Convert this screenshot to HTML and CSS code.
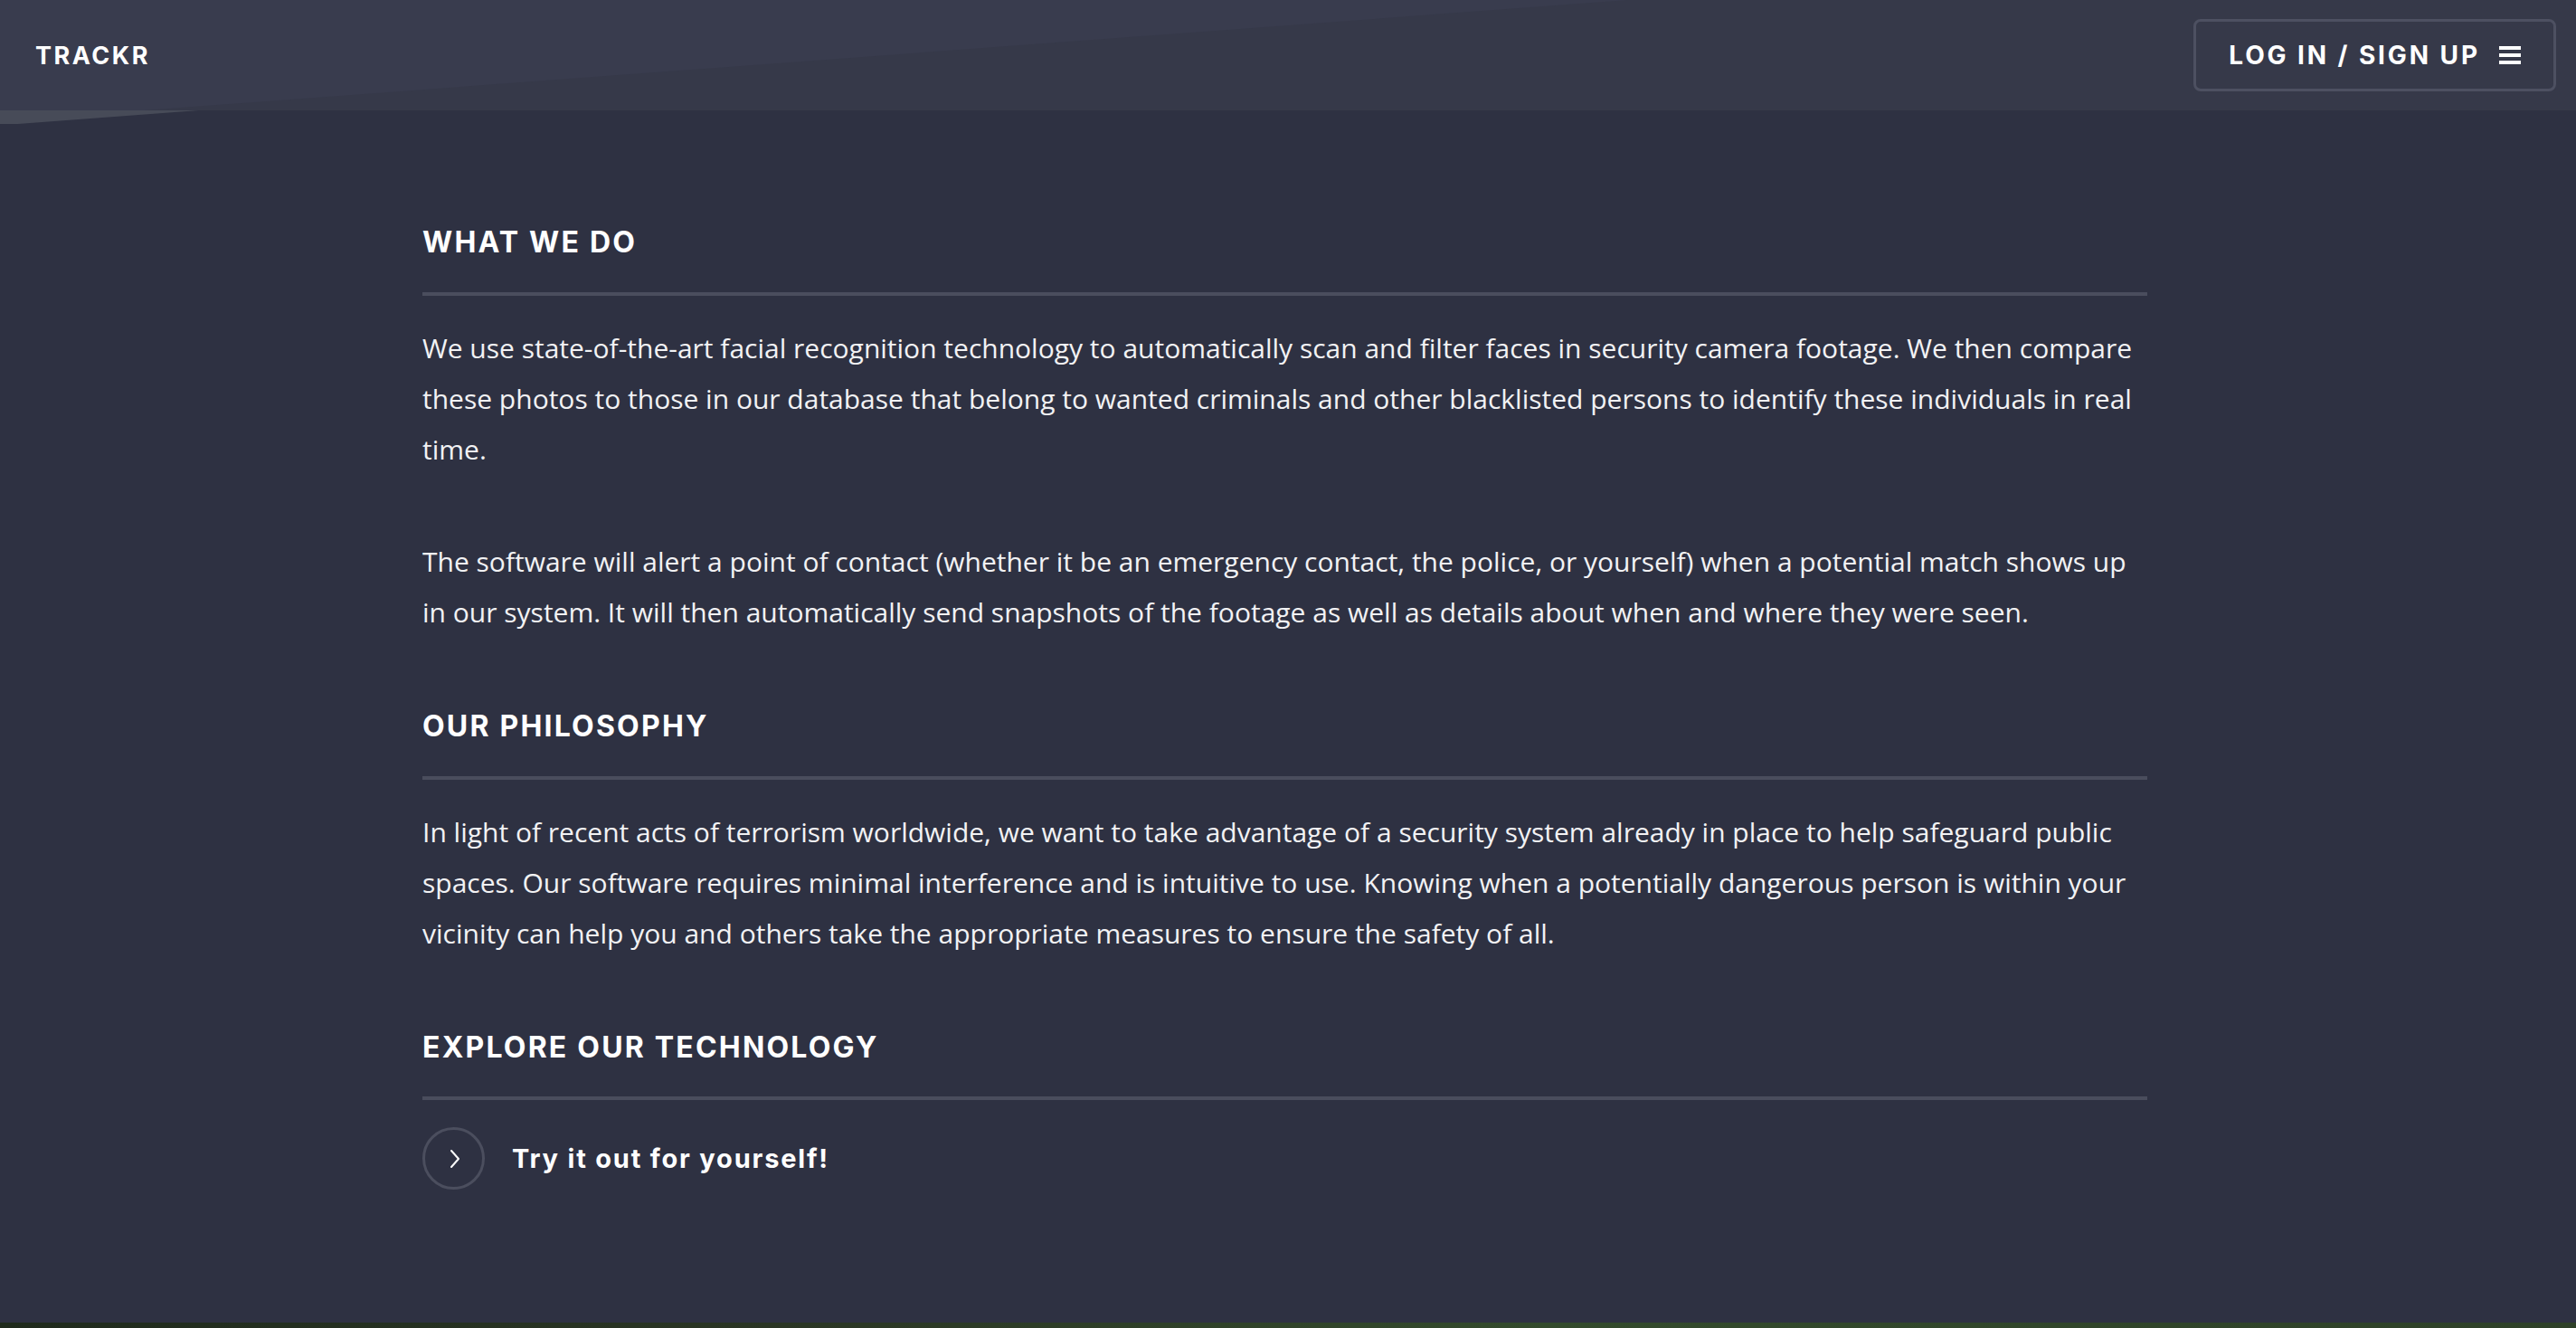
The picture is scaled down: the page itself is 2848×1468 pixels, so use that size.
FILE: index.html
```html
<!DOCTYPE html>
<html lang="en">
<head>
<meta charset="utf-8">
<title>Trackr</title>
<link rel="stylesheet" href="styles.css">
</head>
<body>
<header class="topbar">
  <div class="brand">TRACKR</div>
  <button class="auth-btn" type="button">
    <span class="auth-label">LOG IN / SIGN UP</span>
    <span class="burger"><span></span><span></span><span></span></span>
  </button>
</header>
<main class="content">
  <div class="container">
    <section class="block">
      <h2 class="block-title">WHAT WE DO</h2>
      <hr class="rule">
      <p class="copy">We use state-of-the-art facial recognition technology to automatically scan and filter faces in security camera footage. We then compare these photos to those in our database that belong to wanted criminals and other blacklisted persons to identify these individuals in real time.</p>
      <p class="copy">The software will alert a point of contact (whether it be an emergency contact, the police, or yourself) when a potential match shows up in our system. It will then automatically send snapshots of the footage as well as details about when and where they were seen.</p>
    </section>
    <section class="block">
      <h2 class="block-title">OUR PHILOSOPHY</h2>
      <hr class="rule">
      <p class="copy">In light of recent acts of terrorism worldwide, we want to take advantage of a security system already in place to help safeguard public spaces. Our software requires minimal interference and is intuitive to use. Knowing when a potentially dangerous person is within your vicinity can help you and others take the appropriate measures to ensure the safety of all.</p>
    </section>
    <section class="block">
      <h2 class="block-title">EXPLORE OUR TECHNOLOGY</h2>
      <hr class="rule rule-tight">
      <a class="try-link" href="#">
        <span class="circle">
          <svg width="14" height="22" viewBox="0 0 14 22" aria-hidden="true"><path d="M3 2 L11 11 L3 20" fill="none" stroke="#ffffff" stroke-width="2" stroke-linecap="round" stroke-linejoin="round"/></svg>
        </span>
        <span class="try-text">Try it out for yourself!</span>
      </a>
    </section>
  </div>
</main>
<div class="bottom-strip"></div>
</body>
</html>
```

FILE: styles.css
```css
html, body {
  margin: 0;
  padding: 0;
}
body {
  background: #2e3142;
  color: #ffffff;
  font-family: "Open Sans", "Noto Sans", sans-serif;
  overflow: hidden;
}

.topbar {
  position: relative;
  z-index: 2;
  height: 122px;
  background: #363949;
  display: flex;
  align-items: center;
  justify-content: space-between;
  padding: 0 22px 0 39px;
  box-sizing: border-box;
}
.topbar::before {
  content: "";
  position: absolute;
  left: 0;
  top: 0;
  width: 1800px;
  height: 122px;
  background: #393c4e;
  clip-path: polygon(0 0, 1800px 0, 160px 122px, 0 122px);
  z-index: -1;
}
.topbar::after {
  content: "";
  position: absolute;
  left: 0;
  top: 122px;
  width: 220px;
  height: 15px;
  background: #474b58;
  clip-path: polygon(0 0, 220px 0, 20px 15px, 0 15px);
}

.brand {
  font-family: "Inter", "Lato", sans-serif;
  font-weight: 700;
  font-size: 27px;
  letter-spacing: 2.5px;
  color: #ffffff;
  line-height: 1;
  margin-top: 1px;
}

.auth-btn {
  display: flex;
  align-items: center;
  gap: 21px;
  height: 80px;
  padding: 0 36px;
  background: transparent;
  border: 3px solid #4d5061;
  border-radius: 8px;
  color: #ffffff;
  font-family: "Inter", "Lato", sans-serif;
  font-weight: 700;
  font-size: 28px;
  letter-spacing: 2.9px;
  cursor: pointer;
  box-sizing: border-box;
}
.auth-label {
  line-height: 1;
}
.burger {
  display: flex;
  flex-direction: column;
  justify-content: space-between;
  width: 24px;
  height: 20px;
}
.burger span {
  display: block;
  height: 4px;
  background: #ffffff;
}

.content {
  height: 1340px;
  box-sizing: border-box;
  padding-top: 126px;
}
.container {
  width: 1914px;
  padding-right: 7px;
  box-sizing: border-box;
  margin: 0 auto;
}

.block {
  margin-bottom: 78px;
}
.block-title {
  margin: 0;
  font-family: "Inter", "Lato", sans-serif;
  font-weight: 700;
  font-size: 32px;
  line-height: 40px;
  letter-spacing: 2.2px;
  color: #ffffff;
}
.rule {
  margin: 35px 0 30px;
  border: 0;
  height: 4px;
  background: #4a4d5d;
}
.rule-tight {
  margin-top: 34px;
}
.copy {
  margin: 0 0 68px;
  font-size: 30px;
  line-height: 56px;
  color: #f2f2f4;
}
.copy:last-child {
  margin-bottom: 0;
}

.try-link {
  display: flex;
  align-items: center;
  gap: 30px;
  color: #ffffff;
  text-decoration: none;
}
.circle {
  width: 69px;
  height: 69px;
  border: 3px solid #4b4e5e;
  border-radius: 50%;
  box-sizing: border-box;
  display: flex;
  align-items: center;
  justify-content: center;
}
.circle svg {
  margin-left: 2px;
}
.try-text {
  font-family: "Inter", "Lato", sans-serif;
  font-weight: 700;
  font-size: 29px;
  letter-spacing: 1.8px;
}

.bottom-strip {
  height: 6px;
  background: linear-gradient(90deg, #1f2a1c 0%, #2a3524 30%, #334a2c 60%, #2e4028 100%);
}
```
